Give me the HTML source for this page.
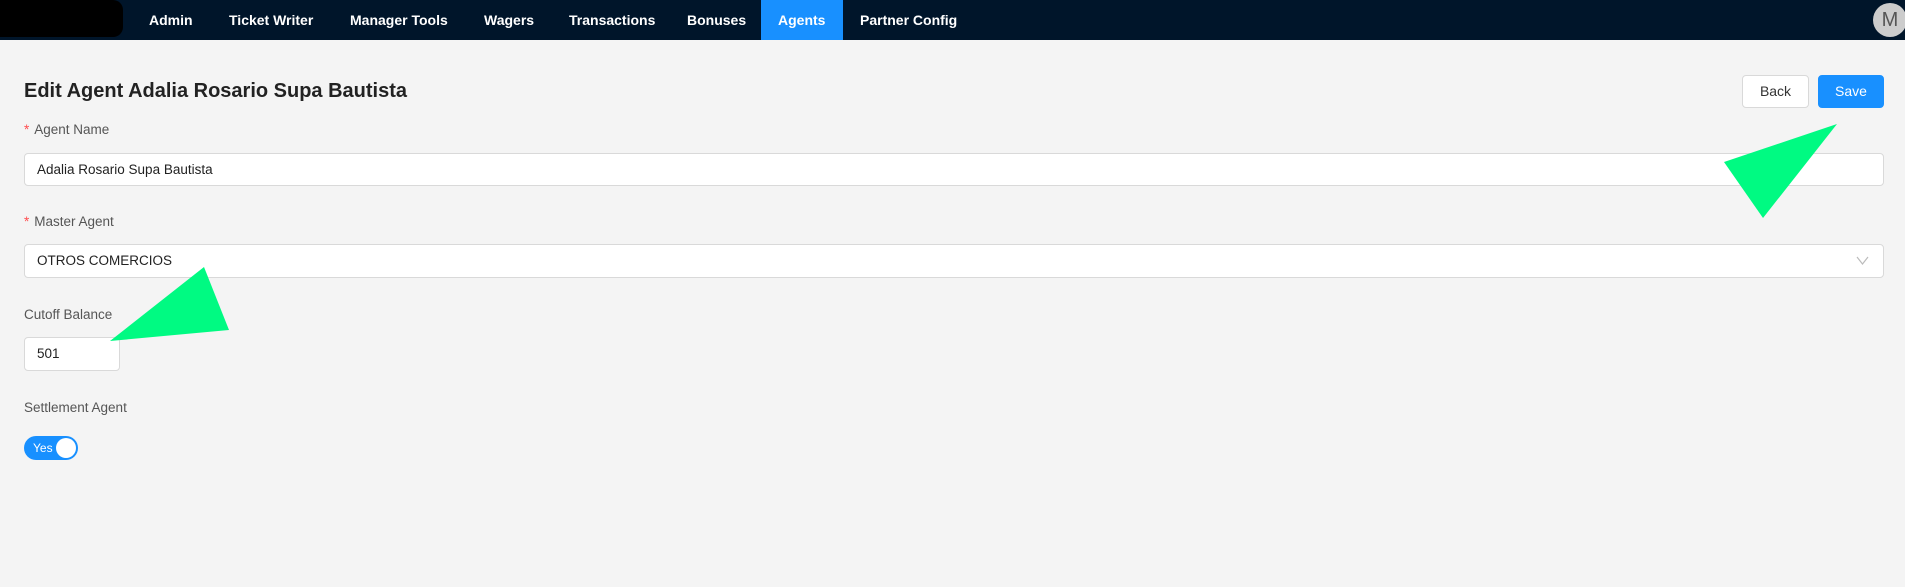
<!DOCTYPE html>
<html><head><meta charset="utf-8"><style>
*{box-sizing:border-box;margin:0;padding:0}
body{width:1905px;height:587px;background:#f4f4f4;font-family:"Liberation Sans",sans-serif;position:relative;overflow:hidden;color:#333}
.nav{position:absolute;left:0;top:0;width:1905px;height:40px;background:#00152a}
.logo{position:absolute;left:0;top:0;width:123px;height:37px;background:#000;border-radius:0 10px 10px 0}
.ni{position:absolute;top:0;height:40px;line-height:40px;color:#fff;font-weight:bold;font-size:14px;white-space:nowrap}
.act{background:#1890ff;padding:0 17px}
.av{position:absolute;right:-2px;top:3px;width:34px;height:34px;border-radius:50%;background:#ccc;color:#555;font-size:20px;text-align:center;line-height:34px}
h1{position:absolute;left:24px;top:80px;font-size:20px;font-weight:bold;color:#222}
.lbl{position:absolute;left:24px;font-size:13.5px;color:#555}
.req{color:#ff4d4f;margin-right:5px}
.inp{position:absolute;left:24px;background:#fff;border:1px solid #d9d9d9;border-radius:4px;font-size:13.5px;padding-left:12px;color:#222}
.btn{position:absolute;top:75px;height:33px;border-radius:4px;font-size:14px;text-align:center;line-height:31px}
</style></head><body>
<div class="nav">
<div class="logo"></div>
<div class="ni" style="left:149px">Admin</div>
<div class="ni" style="left:229px">Ticket Writer</div>
<div class="ni" style="left:350px">Manager Tools</div>
<div class="ni" style="left:484px">Wagers</div>
<div class="ni" style="left:569px">Transactions</div>
<div class="ni" style="left:687px">Bonuses</div>
<div class="ni act" style="left:761px;width:82px">Agents</div>
<div class="ni" style="left:860px">Partner Config</div>
<div class="av">M</div>
</div>
<h1>Edit Agent Adalia Rosario Supa Bautista</h1>
<div class="btn" style="left:1742px;width:67px;background:#fff;border:1px solid #d9d9d9;color:#333">Back</div>
<div class="btn" style="left:1818px;width:66px;background:#1890ff;color:#fff;border:1px solid #1890ff">Save</div>
<div class="lbl" style="top:122px"><span class="req">*</span>Agent Name</div>
<div class="inp" style="top:153px;width:1860px;height:33px;line-height:31px">Adalia Rosario Supa Bautista</div>
<div class="lbl" style="top:214px"><span class="req">*</span>Master Agent</div>
<div class="inp" style="top:244px;width:1860px;height:34px;line-height:32px">OTROS COMERCIOS
<svg style="position:absolute;right:14px;top:11px" width="13" height="10"><path d="M1 1 L6.5 8 L12 1" fill="none" stroke="#bbb" stroke-width="1.2"/></svg></div>
<div class="lbl" style="top:307px">Cutoff Balance</div>
<div class="inp" style="top:337px;width:96px;height:34px;line-height:32px">501</div>
<div class="lbl" style="top:400px">Settlement Agent</div>
<div style="position:absolute;left:24px;top:436px;width:54px;height:24px;border-radius:12px;background:#1890ff;color:#fff;font-size:12px;line-height:24px;padding-left:9px">Yes
<div style="position:absolute;right:2px;top:2px;width:20px;height:20px;border-radius:50%;background:#fff"></div></div>
<svg style="position:absolute;left:0;top:0" width="1905" height="587">
<polygon points="1837,124 1724,162 1763,218" fill="#00fa82"/>
<polygon points="204,267 229,330 110,341" fill="#00fa82"/>
</svg>
</body></html>
